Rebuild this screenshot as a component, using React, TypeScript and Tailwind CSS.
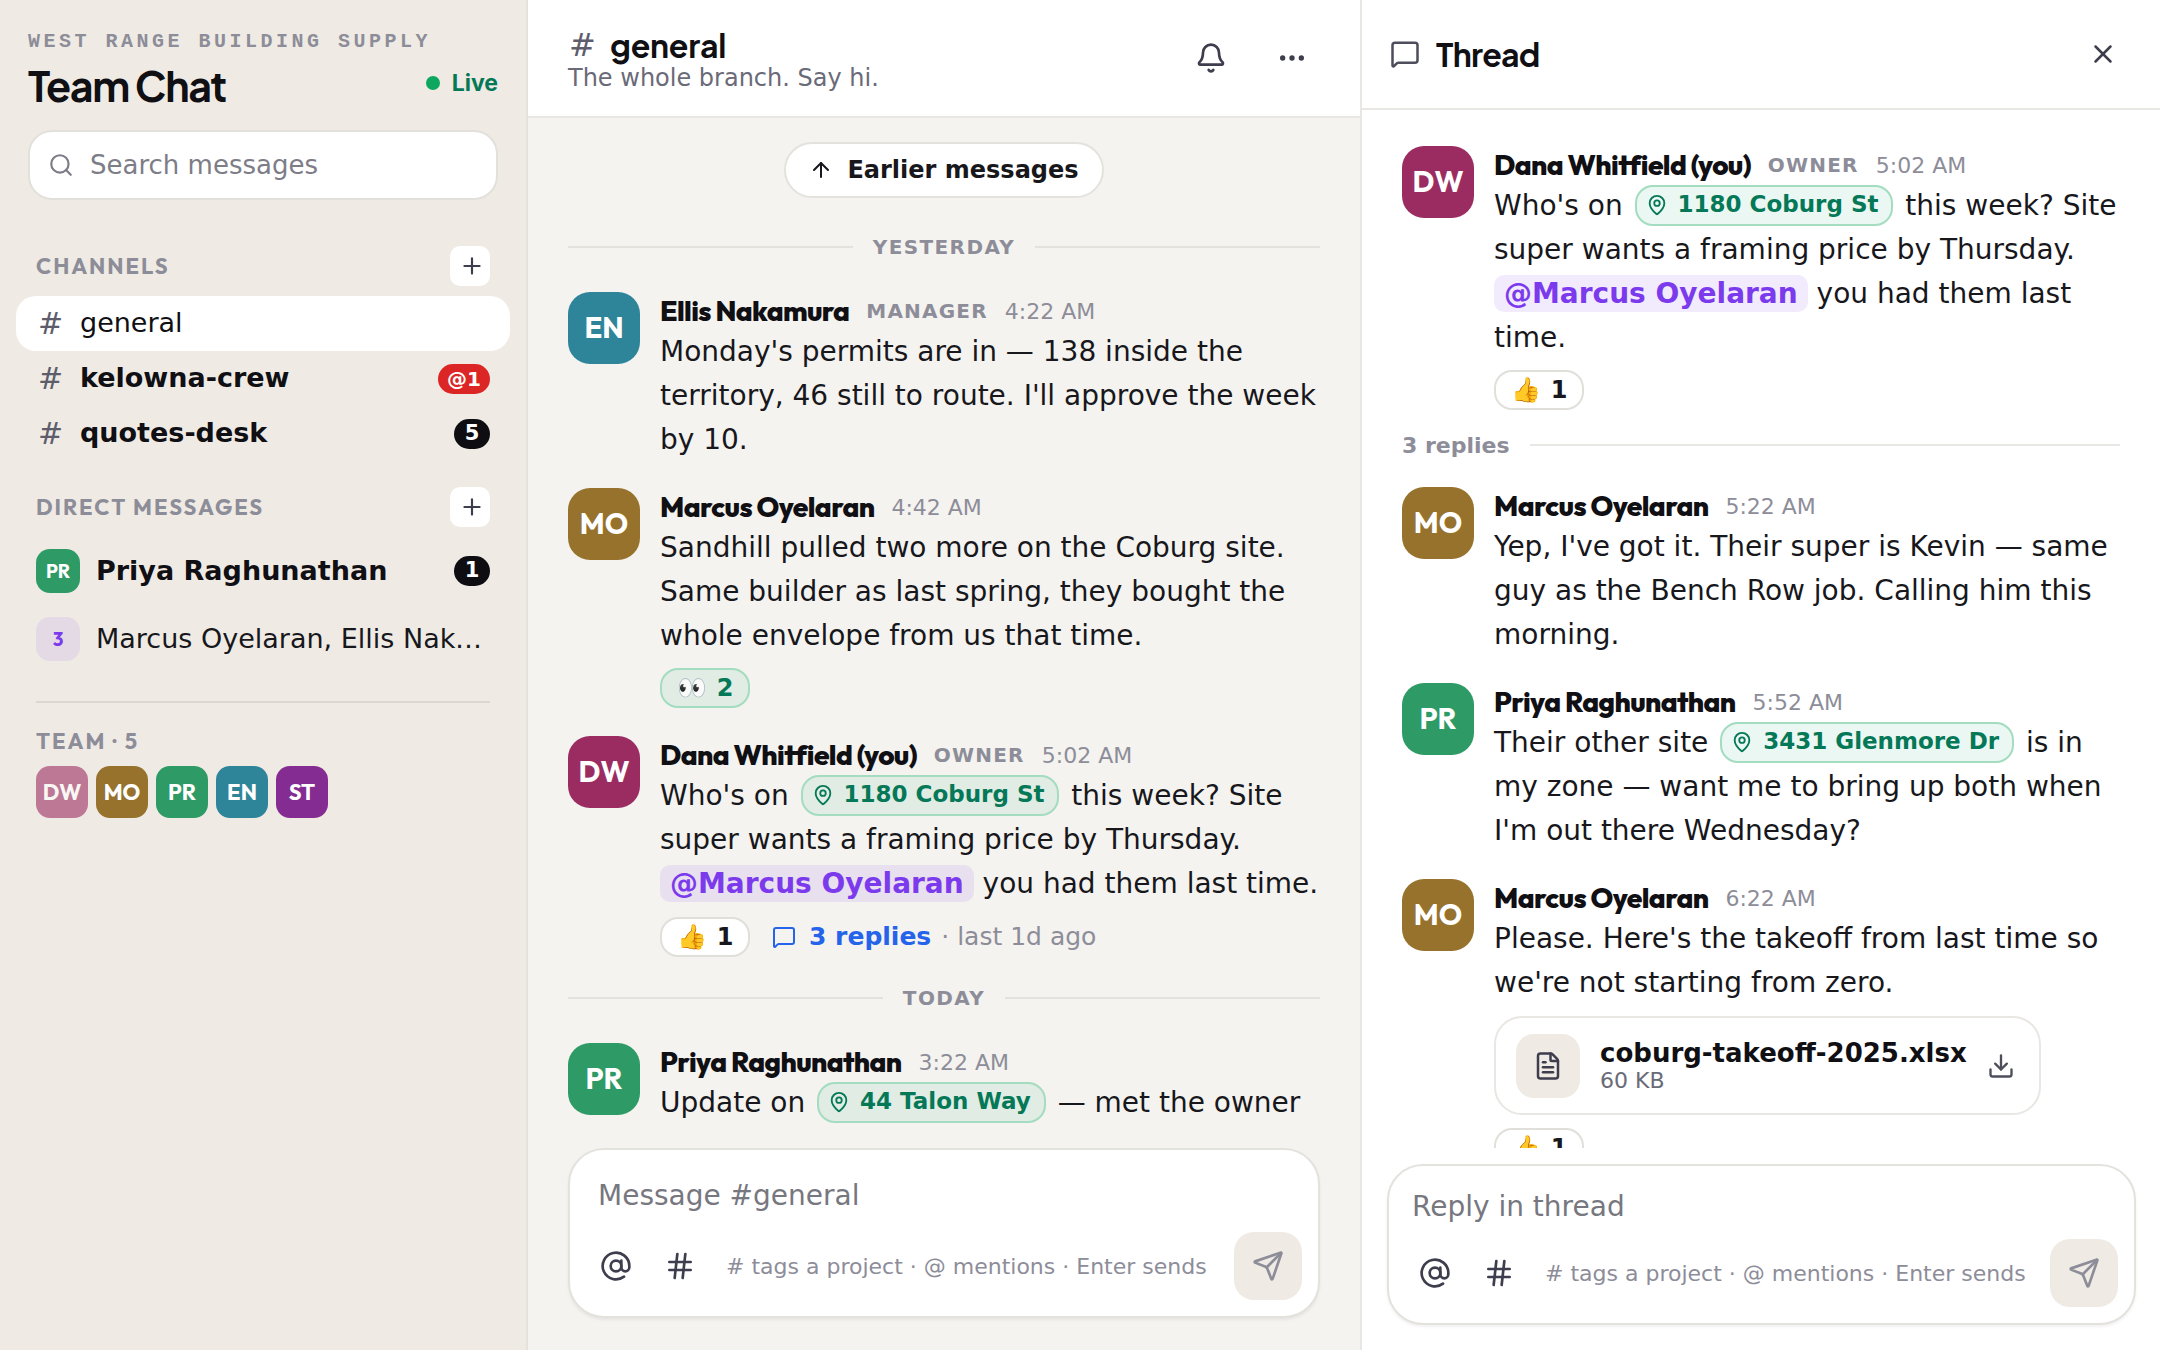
import { ArrowUp, AtSign, Bell, Download, Ellipsis, FileText, Hash, MapPin, MessageSquare, Plus, Search, Send, X } from "lucide-react";
import type { ReactNode } from "react";

const colors: Record<string, string> = {
  DW: "bg-[#9b2c61]",
  MO: "bg-[#96722d]",
  PR: "bg-[#2e9a66]",
  EN: "bg-[#2e8499]",
  ST: "bg-[#852c92]",
};

function Avatar({ who }: { who: string }) {
  return (
    <div className={`${colors[who]} w-[72px] h-[72px] shrink-0 rounded-[22px] flex items-center justify-center text-white text-[29px] font-bold font-['Outfit']`}>
      {who}
    </div>
  );
}

function Place({ name }: { name: string }) {
  return (
    <span className="inline-flex items-center gap-[10px] h-[41px] -my-[6px] pl-[9px] pr-[13px] mx-[3px] rounded-[18px] border-2 border-[#a4dcbf] bg-[#059669]/[0.08] text-[#047857] font-bold text-[23px] leading-none align-middle -translate-y-[2px]">
      <MapPin size={22} strokeWidth={2} />
      <span className="-translate-y-[1px]">{name}</span>
    </span>
  );
}

function Mention({ name }: { name: string }) {
  return <span className="inline-block leading-[37px] px-[10px] rounded-[10px] bg-[#7c3aed]/10 text-[#7c3aed] font-bold">{name}</span>;
}

function Reaction({ emoji, n, green }: { emoji: string; n: number; green?: boolean }) {
  return (
    <span className={`inline-flex items-center justify-center gap-[10px] h-[40px] w-[90px] rounded-[18px] border-2 font-bold text-[24px] ${green ? "border-[#a4dcbf] bg-[#059669]/[0.08] text-[#047857]" : "border-[#e1dfda] bg-white text-[#17171c]"}`}>
      <span>{emoji}</span>
      <span>{n}</span>
    </span>
  );
}

function Msg({ who, name, role, time, children, className = "mb-[26px]" }: { who: string; name: string; role?: string; time: string; children: ReactNode; className?: string }) {
  return (
    <div className={`flex gap-[20px] ${className}`}>
      <Avatar who={who} />
      <div className="flex-1 min-w-0">
        <div className="h-[38px] flex items-center gap-[17px]">
          <span className="font-['Outfit'] font-extrabold text-[28px] text-[#0f0f14] tracking-[-0.6px]">{name}</span>
          {role && <span className="font-bold text-[20px] tracking-[1.2px] text-[#8d8d99]">{role}</span>}
          <span className="text-[22px] text-[#8d8d99]">{time}</span>
        </div>
        <div className="text-[28px] leading-[44px] text-[#17171c]">{children}</div>
      </div>
    </div>
  );
}

function DayLine({ label, className = "" }: { label: string; className?: string }) {
  return (
    <div className={`flex items-center gap-[20px] h-[36px] mb-[27px] ${className}`}>
      <div className="flex-1 h-[2px] bg-[#e4e2dd]" />
      <span className="font-bold text-[20px] tracking-[1.4px] text-[#8d8d99]">{label}</span>
      <div className="flex-1 h-[2px] bg-[#e4e2dd]" />
    </div>
  );
}

function Composer({ placeholder, className, place }: { placeholder: string; className: string; place: string }) {
  return (
    <div className={`bg-white border-2 border-[#e4e2dd] rounded-[36px] shadow-[0_2px_3px_rgba(0,0,0,0.06)] flex flex-col justify-end px-[16px] pb-[16px] relative ${className}`}>
      <div className={`absolute ${place} text-[28px] leading-[44px] text-[#77777f]`}>{placeholder}</div>
      <div className="flex items-center">
        <div className="w-[60px] h-[60px] flex items-center justify-center text-[#3d3d4d]"><AtSign size={32} strokeWidth={2} /></div>
        <div className="w-[60px] h-[60px] ml-[4px] flex items-center justify-center text-[#3d3d4d]"><Hash size={32} strokeWidth={2} /></div>
        <span className="ml-[16px] text-[22px] text-[#8d8d99] whitespace-nowrap"># tags a project · @ mentions · Enter sends</span>
        <div className="ml-auto w-[68px] h-[68px] rounded-[20px] bg-[#efebe4] flex items-center justify-center text-[#8d8d99]"><Send size={32} strokeWidth={2} /></div>
      </div>
    </div>
  );
}

function Label({ children }: { children: ReactNode }) {
  return <span className="font-['Outfit'] font-bold text-[22px] tracking-[2px] text-[#8d8d99]">{children}</span>;
}

function SectionHead({ label, className }: { label: string; className: string }) {
  return (
    <div className={`flex items-center justify-between pl-[36px] pr-[36px] ${className}`}>
      <Label>{label}</Label>
      <div className="w-[40px] h-[40px] pl-[4px] rounded-[10px] bg-white flex items-center justify-center text-[#3d3d4d]"><Plus size={26} strokeWidth={2} /></div>
    </div>
  );
}

function Channel({ name, active, badge }: { name: string; active?: boolean; badge?: ReactNode }) {
  return (
    <div className={`mx-[16px] h-[55px] pl-[22px] pr-[20px] rounded-[20px] flex items-center ${active ? "bg-white" : ""}`}>
      <span className="w-[42px] shrink-0 text-[30px] leading-none text-[#5d5d6b]">#</span>
      <span className={`text-[27px] text-[#0f0f14] ${active ? "" : "font-bold"}`}>{name}</span>
      <div className="ml-auto">{badge}</div>
    </div>
  );
}

function CountBadge({ n }: { n: number }) {
  return <span className="w-[36px] h-[30px] rounded-full bg-[#0d0d12] text-white font-bold text-[21px] flex items-center justify-center">{n}</span>;
}

export default function App() {
  return (
    <div className="w-[2160px] h-[1350px] flex overflow-hidden bg-white font-['DejaVu_Sans',sans-serif] text-[#17171c]">
      {/* Sidebar */}
      <aside className="w-[528px] shrink-0 bg-[#efebe4] border-r-2 border-[#e4e2dd] flex flex-col">
        <div className="pl-[28px] pr-[28px] pt-[29px]">
          <div className="font-['Liberation_Mono'] font-bold text-[20px] leading-[26px] tracking-[3.5px] text-[#8d8d99] whitespace-nowrap">WEST RANGE BUILDING SUPPLY</div>
          <div className="flex items-center justify-between mt-[4px] h-[54px]">
            <span className="font-['Plus_Jakarta_Sans'] font-bold text-[41px] tracking-[-1.3px] text-[#0f0f14]">Team Chat</span>
            <span className="flex items-center gap-[12px] font-['Inter'] font-bold text-[23px] text-[#047857] -translate-y-[3px]">
              <span className="w-[14px] h-[14px] rounded-full bg-[#0da75f]" />
              Live
            </span>
          </div>
        </div>
        <div className="mx-[28px] mt-[17px] h-[70px] rounded-[24px] bg-white border-2 border-[#e2e0db] flex items-center pl-[18px] gap-[16px] text-[#7d7d88]">
          <Search size={26} strokeWidth={2} className="shrink-0" />
          <span className="text-[26px] text-[#7d7d88]">Search messages</span>
        </div>
        <SectionHead label="CHANNELS" className="mt-[46px] mb-[10px]" />
        <Channel name="general" active />
        <Channel
          name="kelowna-crew"
          badge={<span className="w-[52px] h-[30px] rounded-full bg-[#dc2626] text-white font-bold text-[20px] flex items-center justify-center">@1</span>}
        />
        <Channel name="quotes-desk" badge={<CountBadge n={5} />} />
        <SectionHead label="DIRECT MESSAGES" className="mt-[26px] mb-[22px]" />
        <div className="flex items-center h-[44px] pl-[36px] pr-[36px]">
          <div className="w-[44px] h-[44px] rounded-[14px] bg-[#2e9a66] text-white font-['Outfit'] font-bold text-[19px] flex items-center justify-center">PR</div>
          <span className="ml-[16px] font-bold text-[27px] text-[#0f0f14]">Priya Raghunathan</span>
          <div className="ml-auto"><CountBadge n={1} /></div>
        </div>
        <div className="flex items-center h-[44px] pl-[36px] pr-[36px] mt-[24px]">
          <div className="w-[44px] h-[44px] rounded-[14px] bg-[#e3dae5] text-[#7c3aed] font-['Outfit'] font-bold text-[19px] flex items-center justify-center shrink-0">3</div>
          <span className="ml-[16px] text-[27px] text-[#17171c] truncate">Marcus Oyelaran, Ellis Nakamura</span>
        </div>
        <div className="mx-[36px] mt-[40px] h-[2px] bg-[#dcd8d1]" />
        <div className="pl-[36px] mt-[24px] leading-[28px]"><Label>TEAM · 5</Label></div>
        <div className="flex gap-[8px] pl-[36px] mt-[8px]">
          {["DW", "MO", "PR", "EN", "ST"].map((w, i) => (
            <div key={w} className={`${colors[w]} ${i === 0 ? "opacity-60" : ""} w-[52px] h-[52px] rounded-[14px] text-white font-['Outfit'] font-bold text-[22px] flex items-center justify-center`}>{w}</div>
          ))}
        </div>
      </aside>

      {/* Main */}
      <main className="w-[832px] shrink-0 bg-[#f4f3ef] flex flex-col">
        <header className="h-[118px] shrink-0 bg-white border-b-2 border-[#e9e7e3] flex items-center pl-[40px] pr-[52px]">
          <div className="flex-1 pt-[4px]">
            <div className="flex items-center h-[36px]">
              <span className="w-[42px] pl-[1px] text-[32px] leading-none text-[#5d5d6b]">#</span>
              <span className="font-['Plus_Jakarta_Sans'] font-bold text-[32px] tracking-[-0.2px] text-[#0f0f14]">general</span>
            </div>
            <div className="text-[24px] leading-[30px] text-[#6a6a78]">The whole branch. Say hi.</div>
          </div>
          <Bell size={32} strokeWidth={2} className="text-[#3d3d4d]" />
          <Ellipsis size={32} strokeWidth={2} className="text-[#3d3d4d] ml-[49px]" />
        </header>
        <div className="flex-1 min-h-0 overflow-hidden px-[40px] pt-[24px]">
          <div className="flex justify-center mb-[31px]">
            <div className="w-[320px] h-[56px] rounded-full bg-white border-2 border-[#e4e2dd] flex items-center justify-center gap-[14px] font-bold text-[24px] text-[#17171c]">
              <ArrowUp size={24} strokeWidth={2} />
              Earlier messages
            </div>
          </div>
          <DayLine label="YESTERDAY" />
          <Msg who="EN" name="Ellis Nakamura" role="MANAGER" time="4:22 AM">
            Monday's permits are in — 138 inside the territory, 46 still to route. I'll approve the week by 10.
          </Msg>
          <Msg who="MO" name="Marcus Oyelaran" time="4:42 AM">
            Sandhill pulled two more on the Coburg site. Same builder as last spring, they bought the whole envelope from us that time.
            <div className="mt-[10px] h-[40px] mb-[2px] flex"><Reaction emoji="👀" n={2} green /></div>
          </Msg>
          <Msg who="DW" name="Dana Whitfield (you)" role="OWNER" time="5:02 AM" className="mb-[23px]">
            Who's on <Place name="1180 Coburg St" /> this week? Site super wants a framing price by Thursday. <Mention name="@Marcus Oyelaran" /> you had them last time.
            <div className="mt-[11px] h-[40px] flex items-center">
              <Reaction emoji="👍" n={1} />
              <MessageSquare size={24} strokeWidth={2} className="ml-[22px] text-[#2563eb]" />
              <span className="ml-[13px] font-bold text-[25px] text-[#2563eb]">3 replies</span>
              <span className="ml-[10px] text-[25px] text-[#8d8d99]">· last 1d ago</span>
            </div>
          </Msg>
          <DayLine label="TODAY" />
          <Msg who="PR" name="Priya Raghunathan" time="3:22 AM">
            Update on <Place name="44 Talon Way" /> — met the owner at the site this morning and he is keen to get going.
          </Msg>
        </div>
        <div className="shrink-0 px-[40px] pt-[22px] pb-[32px]">
          <Composer placeholder="Message #general" className="h-[170px]" place="left-[28px] top-[24px]" />
        </div>
      </main>

      {/* Thread */}
      <section className="w-[800px] shrink-0 bg-white border-l-2 border-[#e9e7e3] flex flex-col">
        <header className="h-[110px] shrink-0 border-b-2 border-[#e9e7e3] flex items-center pl-[28px] pr-[42px]">
          <MessageSquare size={30} strokeWidth={2} className="text-[#4d4d5c]" />
          <span className="ml-[16px] font-['Plus_Jakarta_Sans'] font-bold text-[32px] tracking-[-0.7px] text-[#0f0f14]">Thread</span>
          <X size={30} strokeWidth={2} className="ml-auto text-[#3d3d4d]" />
        </header>
        <div className="flex-1 min-h-0 overflow-hidden pl-[40px] pr-[40px] pt-[36px]">
          <Msg who="DW" name="Dana Whitfield (you)" role="OWNER" time="5:02 AM" className="mb-[17px]">
            Who's on <Place name="1180 Coburg St" /> this week? Site super wants a framing price by Thursday. <Mention name="@Marcus Oyelaran" /> you had them last time.
            <div className="mt-[10px] h-[40px] flex"><Reaction emoji="👍" n={1} /></div>
          </Msg>
          <div className="flex items-center gap-[20px] h-[36px] mb-[24px]">
            <span className="font-bold text-[22px] text-[#8d8d99]">3 replies</span>
            <div className="flex-1 h-[2px] bg-[#e9e7e3]" />
          </div>
          <Msg who="MO" name="Marcus Oyelaran" time="5:22 AM">
            Yep, I've got it. Their super is Kevin — same guy as the Bench Row job. Calling him this morning.
          </Msg>
          <Msg who="PR" name="Priya Raghunathan" time="5:52 AM">
            Their other site <Place name="3431 Glenmore Dr" /> is in my zone — want me to bring up both when I'm out there Wednesday?
          </Msg>
          <Msg who="MO" name="Marcus Oyelaran" time="6:22 AM">
            Please. Here's the takeoff from last time so we're not starting from zero.
            <div className="mt-[11px] w-[547px] h-[99px] rounded-[28px] border-2 border-[#e9e7e3] bg-white flex items-center pl-[20px] pr-[24px]">
              <div className="w-[64px] h-[64px] rounded-[18px] bg-[#efebe4] flex items-center justify-center text-[#3d3d4d]"><FileText size={30} strokeWidth={2} /></div>
              <div className="ml-[20px] flex-1 -translate-y-[1px]">
                <div className="font-bold text-[26px] leading-[32px] text-[#0f0f14]">coburg-takeoff-2025.xlsx</div>
                <div className="text-[22px] leading-[24px] text-[#6a6a78]">60 KB</div>
              </div>
              <Download size={28} strokeWidth={2} className="text-[#4d4d5c]" />
            </div>
            <div className="mt-[13px] h-[40px] flex"><Reaction emoji="👍" n={1} /></div>
          </Msg>
        </div>
        <div className="shrink-0 pl-[25px] pr-[24px] pt-[16px] pb-[25px]">
          <Composer placeholder="Reply in thread" className="h-[161px]" place="left-[23px] top-[19px]" />
        </div>
      </section>
    </div>
  );
}
